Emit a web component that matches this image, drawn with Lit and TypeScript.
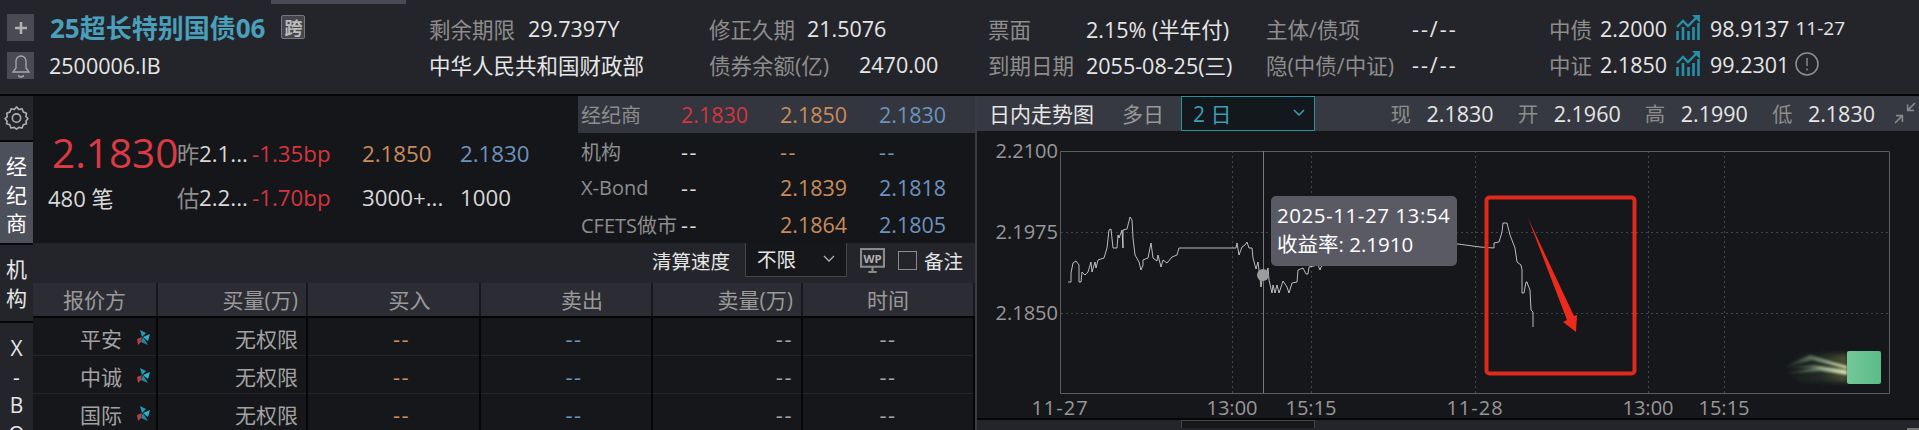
import { LitElement, html, css, svg } from "lit";
import { customElement } from "lit/decorators.js";

const LINE = "1068,282 1071,282 1071,273 1073,263 1076,261 1079,265 1079,282 1081,282 1082,272 1085,275 1088,272 1091,262 1092,272 1095,262 1096,268 1098,260 1104,258 1107,248 1109,230 1111,229 1113,248 1117,248 1118,235 1119,238 1122,230 1123,248 1123,230 1127,229 1130,217 1132,220 1133,238 1135,255 1139,262 1141,270 1143,265 1143,260 1148,258 1151,243 1153,258 1157,261 1158,255 1161,267 1163,260 1167,263 1172,257 1177,255 1179,248 1236,248 1237,243 1239,255 1242,247 1245,245 1247,242 1249,248 1252,248 1253,258 1256,269 1258,262 1259,270 1261,287 1263,272 1265,278 1268,268 1269,280 1272,293 1273,285 1275,293 1277,285 1279,293 1283,281 1287,287 1289,293 1292,283 1297,282 1298,270 1303,268 1306,274 1308,274 1309,267 1318,265 1320,270 1321,267 1340,250 1458,244 1480,247 1494,248 1494,243 1499,242 1502,232 1503,223 1507,223 1510,235 1515,248 1517,262 1521,265 1522,270 1522,293 1524,293 1526,282 1527,282 1528,285 1530,290 1531,310 1533,312 1533,327";

const trendIcon = html`<svg class="trend" viewBox="0 0 24 26" width="24" height="26" fill="none">
  <path d="M1.5 25V16M7 25V12M12.5 25V16M17.5 25V12M22.5 25V8" stroke="#2590a8" stroke-width="2.6"/>
  <path d="M1 12 7 6l5 5 9-9" stroke="#2590a8" stroke-width="2.4"/>
  <path d="M16 0h8v8z" fill="#2590a8"/>
</svg>`;

const pinwheel = html`<svg class="pin" viewBox="0 0 14 15" width="14" height="15">
  <path d="M6 7 4 0l6 3z" fill="#1f9db5"/>
  <path d="M7 7l7-3-2 7z" fill="#2db4cc"/>
  <path d="M7 7l5 8-7-3z" fill="#1b8aa2"/>
  <path d="M6 7 1 9l1 6 3-3z" fill="#b5403f"/>
</svg>`;

@customElement("app-root")
export class AppRoot extends LitElement {
  static styles = css`
    :host { display: block; width: 1919px; height: 430px; overflow: hidden; background: #24252b; color: #e6e6e6;
      font-family: "Open Sans", "Noto Sans CJK SC", sans-serif; }
    * { box-sizing: border-box; }
    .hdr { height: 96px; border-bottom: 2px solid #060607; display: flex; position: relative; font-size: 21.5px; white-space: nowrap; }
    .topbar { position: absolute; left: 271px; top: 0; width: 135px; height: 4px; background: #4a4a56; }
    .g1 { width: 429px; display: flex; padding-left: 7px; }
    .btns { width: 43px; padding-top: 14px; display: flex; flex-direction: column; gap: 11px; }
    .btn { width: 27px; height: 27px; background: #4a4b52; display: flex; align-items: center; justify-content: center; }
    .names { display: flex; flex-direction: column; }
    .hgroup { display: flex; flex-direction: column; padding-top: 10px; }
    .hl { height: 36px; display: flex; align-items: center; }
    .title { font-size: 26px; font-weight: 700; color: #4a9fbb; height: 34px; margin-top: 10px; display: flex; align-items: center; }
    .badge { margin-left: 16px; width: 24px; height: 24px; border: 1px solid #77787e; background: #45464c; color: #bbb; font-size: 18px; font-weight: 700; display: flex; align-items: center; justify-content: center; border-radius: 2px; }
    .code { margin: 3px 0 0 -1px; height: 36px; display: flex; align-items: center; }
    .lb { color: #8d8d8d; }
    .w280 { width: 280px; } .w279 { width: 279px; } .w278 { width: 278px; } .w283 { width: 283px; }
    .l99 { width: 99px; } .l98 { width: 98px; } .l150 { width: 150px; } .l146 { width: 146px; } .l51 { width: 51px; }
    .v76 { width: 76px; }
    .sp { letter-spacing: 2px; }
    .trend { margin-right: 10px; }
    .small { font-size: 19px; margin-left: 6px; }
    .info { margin-left: 6px; }

    .body { display: flex; height: 334px; }
    .rail { width: 33px; background: #24252b; font-size: 21px; text-align: center; line-height: 28.5px; overflow: hidden; flex: none; }
    .gear { height: 46px; display: flex; align-items: center; justify-content: center; border-bottom: 2px solid #060607; padding-bottom: 2px; }
    .ri { border-bottom: 2px solid #060607; padding: 10px 0; height: 103px; }
    .ri.on { background: #4c505a; color: #fff; }
    .ri.m { height: 78px; padding: 10px 0; }
    .ri.x { border: 0; height: auto; padding: 11px 0; }
    .main { width: 942px; flex: none; display: flex; flex-direction: column; }
    .top { height: 147px; display: flex; background: #15161a; flex: none; }
    .quote { width: 545px; padding: 35px 0 0 15px; display: grid; grid-template-columns: 129px 22px 53px 110px 98px 1fr; grid-auto-rows: 44px; align-items: center; font-size: 22.3px; white-space: nowrap; }
    .price { font-size: 40.5px; color: #dc3a42; padding-left: 4px; line-height: 44px; }
    .cnt { font-size: 22px; }
    .red { color: #d4353e; } .org { color: #c98c5b; } .blu { color: #6c93bd; } .wht { color: #d8d8d8; }
    .side { width: 397px; font-size: 21.5px; display: flex; flex-direction: column; }
    .srow { height: 37px; display: grid; grid-template-columns: 103px 99px 99px 1fr; align-items: center; white-space: nowrap; }
    .srow.hi { background: #33363e; }
    .srow .lb { padding-left: 3px; font-size: 20px; }
    .ds { letter-spacing: 1.5px; }
    .tools { height: 40px; display: flex; align-items: center; justify-content: flex-end; padding: 0 12px 5px 0; font-size: 19.5px; flex: none; }
    .sel { align-self: flex-start; width: 102px; height: 34px; margin: 0 13px 0 15px; background: #16171b; border: 1px solid #45464c; border-top: 0; display: flex; align-items: center; justify-content: space-between; padding: 0 11px 2px; }
    .cb { width: 19px; height: 19px; border: 1px solid #8a8a8a; margin: 0 7px 0 13px; }
    .tbl { flex: 1; overflow: hidden; background: #16171b; }
    .tr { display: grid; grid-template-columns: 125px 150px 173px 172px 150px 172px; }
    .th { height: 35px; background: #2c2d34; border-bottom: 2px solid #060607; color: #9a9a9a; font-size: 21px; }
    .th > div { display: flex; align-items: center; justify-content: center; border-right: 2px solid #17181c; height: 33px; padding-bottom: 2px; }
    .td { height: 38px; border-bottom: 1px solid #25262c; font-size: 21px; color: #a2a2a2; }
    .td > div { display: flex; align-items: center; justify-content: center; border-right: 2px solid #060607; height: 38px; padding-top: 1px; }
    .tr > .end { justify-content: flex-end; padding-right: 8px; }
    .tr > .off { padding-left: 32px; }
    .td > .off { padding-left: 16px; }
    .td > .nm { justify-content: flex-start; padding-left: 47px; gap: 14px; }
    .dash { font-size: 22px; letter-spacing: 1.5px; }

    .divider { width: 2px; background: #3a3b42; flex: none; }
    .right { width: 942px; flex: none; display: flex; flex-direction: column; background: #24252b; }
    .tabs { height: 35px; background: #363941; display: flex; align-items: center; padding: 0 3px 2px 12px; font-size: 21px; white-space: nowrap; flex: none; }
    .t2 { color: #989898; margin-left: 28px; }
    .rsel { width: 134px; height: 35px; margin: 0 0 -2px 17px; background: #13181c; border: 1px solid #2e8fa3; color: #3a9db5; display: flex; align-items: center; justify-content: space-between; padding: 0 9px 2px 11px; }
    .hq { display: flex; margin-left: auto; font-size: 21.5px; gap: 24px; }
    .hq span { display: inline-block; }
    .hq .lb { width: 36px; font-size: 20.5px; }
    .collapse { margin-left: 19px; }
    .chart { position: relative; height: 289px; background: #16171b; flex: none; border-bottom: 2px solid #060607; overflow: hidden; }
    .chart svg { display: block; }
    .chart text { font-family: "Open Sans", sans-serif; font-size: 20px; fill: #989898; }
    .chart .hy { letter-spacing: 1px; }
    .tip { position: absolute; left: 294px; top: 65px; width: 186px; height: 70px; background: #5a5a65; border-radius: 5px; padding: 5px 6px; font-size: 20.5px; line-height: 29px; color: #fff; white-space: nowrap; }
    .tip .d { letter-spacing: .55px; }
    .foot { flex: 1; position: relative; }
    .footsel { position: absolute; left: 204px; top: 0; width: 134px; height: 8px; background: #16171b; border: 1px solid #45464c; border-bottom: 0; }
    .footbtn { position: absolute; right: 0; bottom: 0; width: 12px; height: 2px; background: #777; }
  `;

  private chart() {
    const hs = [232, 313];
    const vs = [1232, 1311, 1475, 1648, 1724];
    const xl: [number, string, string][] = [[1060, "11-27", "hy"], [1232, "13:00", ""], [1311, "15:15", ""], [1475, "11-28", "hy"], [1648, "13:00", ""], [1724, "15:15", ""]];
    const yl: [number, string][] = [[151, "2.2100"], [232, "2.1975"], [313, "2.1850"]];
    return html`<svg width="942" height="287" viewBox="977 131 942 287" fill="none">
      <defs>
        <linearGradient id="tr" x1="0" x2="1" y1="0" y2="0">
          <stop offset="0" stop-color="#9ad8b0" stop-opacity="0"/><stop offset=".55" stop-color="#c4e6bc" stop-opacity=".45"/><stop offset="1" stop-color="#e8f0b8" stop-opacity=".85"/>
        </linearGradient>
        <linearGradient id="gl" x1="0" x2="1" y1="0" y2="0">
          <stop offset="0" stop-color="#20352c" stop-opacity="0"/><stop offset=".6" stop-color="#2c3a2a" stop-opacity=".6"/><stop offset="1" stop-color="#5c5c3c" stop-opacity=".9"/>
        </linearGradient>
        <linearGradient id="gs" x1="0" x2="1" y1="0" y2="0">
          <stop offset="0" stop-color="#74c79a"/><stop offset="1" stop-color="#5cbb88"/>
        </linearGradient>
        <filter id="bl" x="-10%" y="-40%" width="120%" height="180%"><feGaussianBlur stdDeviation="1.1"/></filter>
        <filter id="bl2" x="-20%" y="-30%" width="140%" height="160%"><feGaussianBlur stdDeviation="2.5"/></filter>
      </defs>
      ${hs.map(y => svg`<line x1="1061" x2="1890" y1=${y + 0.5} y2=${y + 0.5} stroke="#44454a" stroke-dasharray="2 3"/>`)}
      ${vs.map(x => svg`<line x1=${x + 0.5} x2=${x + 0.5} y1="151" y2="393" stroke="#44454a" stroke-dasharray="2 3"/>`)}
      <path d="M1060.5 151.5H1889.5V393.5H1060.5Z" stroke="#5c5d61"/>
      <line x1="1263.5" x2="1263.5" y1="151" y2="393" stroke="#77787c"/>
      ${yl.map(([y, t]) => svg`<text x="1058" y=${y + 7} text-anchor="end">${t}</text>`)}
      ${xl.map(([x, t, c]) => svg`<text class=${c} x=${x} y="415" text-anchor="middle">${t}</text>`)}
      <polyline points=${LINE} stroke="#d8d8d8" stroke-width=".85"/>
      <circle cx="1263" cy="275" r="6" fill="#9c9c9c"/>
      <rect x="1486.5" y="197.5" width="148" height="176" rx="3" stroke="#e0281c" stroke-width="4"/>
      <path d="M1528 218 1574 316 1577 315 1576 332 1563 322 1567 320Z" fill="#ee2a1c"/>
      <path d="M1800 354H1848V382H1800L1782 368Z" fill="url(#gl)" filter="url(#bl2)"/>
      <g filter="url(#bl)">
        <path d="M1782 368 1810 355 1847 366V369L1812 360Z" fill="url(#tr)"/>
        <path d="M1785 368 1815 365 1847 370V373L1815 368Z" fill="url(#tr)"/>
        <path d="M1782 374 1820 367 1847 372 1847 375 1820 371Z" fill="url(#tr)"/>
      </g>
      <rect x="1847" y="351" width="34" height="33" rx="2" fill="url(#gs)"/>
    </svg>`;
  }

  render() {
    const rows: [string][] = [["平安"], ["中诚"], ["国际"]];
    return html`
      <div class="hdr">
        <div class="topbar"></div>
        <div class="g1">
          <div class="btns">
            <div class="btn"><svg width="14" height="14" viewBox="0 0 14 14"><path d="M7 1v12M1 7h12" stroke="#b0b0b0" stroke-width="2.6"/></svg></div>
            <div class="btn"><svg width="20" height="24" viewBox="0 0 20 24" fill="none" stroke="#a8a8a8" stroke-width="1.3"><path d="M10 2a5 5 0 0 0-5 5v7l-3 4h16l-3-4V7a5 5 0 0 0-5-5z"/><path d="M7.5 21a2.5 2 0 0 0 5 0"/></svg></div>
          </div>
          <div class="names">
            <div class="title">25超长特别国债06<span class="badge">跨</span></div>
            <div class="code">2500006.IB</div>
          </div>
        </div>
        <div class="hgroup w280">
          <div class="hl"><span class="lb l99">剩余期限</span><span>29.7397Y</span></div>
          <div class="hl"><span>中华人民共和国财政部</span></div>
        </div>
        <div class="hgroup w279">
          <div class="hl"><span class="lb l98">修正久期</span><span>21.5076</span></div>
          <div class="hl"><span class="lb l150">债券余额(亿)</span><span>2470.00</span></div>
        </div>
        <div class="hgroup w278">
          <div class="hl"><span class="lb l98">票面</span><span>2.15% (半年付)</span></div>
          <div class="hl"><span class="lb l98">到期日期</span><span>2055-08-25(三)</span></div>
        </div>
        <div class="hgroup w283">
          <div class="hl"><span class="lb l146">主体/债项</span><span class="sp">--/--</span></div>
          <div class="hl"><span class="lb l146">隐(中债/中证)</span><span class="sp">--/--</span></div>
        </div>
        <div class="hgroup">
          <div class="hl"><span class="lb l51">中债</span><span class="v76">2.2000</span>${trendIcon}<span>98.9137</span><span class="small">11-27</span></div>
          <div class="hl"><span class="lb l51">中证</span><span class="v76">2.1850</span>${trendIcon}<span>99.2301</span>
            <svg class="info" width="24" height="24" viewBox="0 0 24 24" fill="none" stroke="#8d8d8d"><circle cx="12" cy="12" r="11" stroke-width="1.6"/><path d="M12 6v8M12 16.5v2" stroke-width="1.4"/></svg></div>
        </div>
      </div>
      <div class="body">
        <div class="rail">
          <div class="gear"><svg width="25" height="25" viewBox="0 0 24 24" fill="none" stroke="#b0b0b0" stroke-width="1.5"><path d="M12 1.8l2.2 2.5 3.2-.6 1.1 3.1 3.1 1.2-.6 3.2L23 13l-2 2.6.6 2.4-3.1 1-1.1 3-3.2-.5L12 23.2l-2.2-1.7-3.2.5-1.1-3-3.1-1 .6-2.4L1 13l2.2-1.8-.6-3.2 3.1-1.2 1.1-3.1 3.2.6z" stroke-linejoin="round"/><circle cx="12" cy="12.5" r="4"/></svg></div>
          <div class="ri on">经<br>纪<br>商</div>
          <div class="ri m">机<br>构</div>
          <div class="ri x">X<br>-<br>B<br>O</div>
        </div>
        <div class="main">
          <div class="top">
            <div class="quote">
              <span class="price">2.1830</span><span class="lb">昨</span><span class="wht">2.1...</span><span class="red">-1.35bp</span><span class="org">2.1850</span><span class="blu">2.1830</span>
              <span class="wht cnt">480 笔</span><span class="lb">估</span><span class="wht">2.2...</span><span class="red">-1.70bp</span><span class="wht">3000+...</span><span class="wht">1000</span>
            </div>
            <div class="side">
              <div class="srow hi"><span class="lb">经纪商</span><span class="red">2.1830</span><span class="org">2.1850</span><span class="blu">2.1830</span></div>
              <div class="srow"><span class="lb">机构</span><span class="wht ds">--</span><span class="org ds">--</span><span class="blu ds">--</span></div>
              <div class="srow"><span class="lb">X-Bond</span><span class="wht ds">--</span><span class="org">2.1839</span><span class="blu">2.1818</span></div>
              <div class="srow"><span class="lb">CFETS做市</span><span class="wht ds">--</span><span class="org">2.1864</span><span class="blu">2.1805</span></div>
            </div>
          </div>
          <div class="tools">
            <span>清算速度</span>
            <div class="sel"><span>不限</span><svg width="12" height="7" viewBox="0 0 12 7" fill="none" stroke="#b0b0b0" stroke-width="1.3"><path d="M1 1l5 5 5-5"/></svg></div>
            <svg width="25" height="25" viewBox="0 0 24 24" fill="none"><rect x="1" y="1" width="22" height="17" stroke="#8a8a8a" stroke-width="2"/><text x="12" y="14.5" text-anchor="middle" font-size="11" font-weight="700" fill="#b0b0b0" font-family="Open Sans">WP</text><path d="M12 18v5M8 23h8" stroke="#8a8a8a" stroke-width="2"/></svg>
            <span class="cb"></span>
            <span>备注</span>
          </div>
          <div class="tbl">
            <div class="tr th">
              <div>报价方</div><div class="end">买量(万)</div><div class="off">买入</div><div class="off">卖出</div><div class="end">卖量(万)</div><div>时间</div>
            </div>
            ${rows.map(([n]) => html`<div class="tr td">
              <div class="nm"><span>${n}</span>${pinwheel}</div>
              <div class="end">无权限</div>
              <div class="off org dash">--</div>
              <div class="off blu dash">--</div>
              <div class="end dash">--</div>
              <div class="dash">--</div>
            </div>`)}
          </div>
        </div>
        <div class="divider"></div>
        <div class="right">
          <div class="tabs">
            <span>日内走势图</span><span class="t2">多日</span>
            <div class="rsel"><span>2 日</span><svg width="12" height="7" viewBox="0 0 12 7" fill="none" stroke="#3a9db5" stroke-width="1.5"><path d="M1 1l5 5 5-5"/></svg></div>
            <div class="hq">
              <div><span class="lb">现</span><span>2.1830</span></div>
              <div><span class="lb">开</span><span>2.1960</span></div>
              <div><span class="lb">高</span><span>2.1990</span></div>
              <div><span class="lb">低</span><span>2.1830</span></div>
            </div>
            <svg class="collapse" width="22" height="22" viewBox="0 0 21 21" fill="none" stroke="#8a8a8a" stroke-width="1.5"><path d="M20 1 13 8M13 2.5V8h6M1 20l7-7M2 13h6v6"/></svg>
          </div>
          <div class="chart">
            ${this.chart()}
            <div class="tip"><span class="d">2025-11-27 13:54</span><br>收益率: 2.1910</div>
          </div>
          <div class="foot"><div class="footsel"></div><div class="footbtn"></div></div>
        </div>
      </div>
    `;
  }
}
